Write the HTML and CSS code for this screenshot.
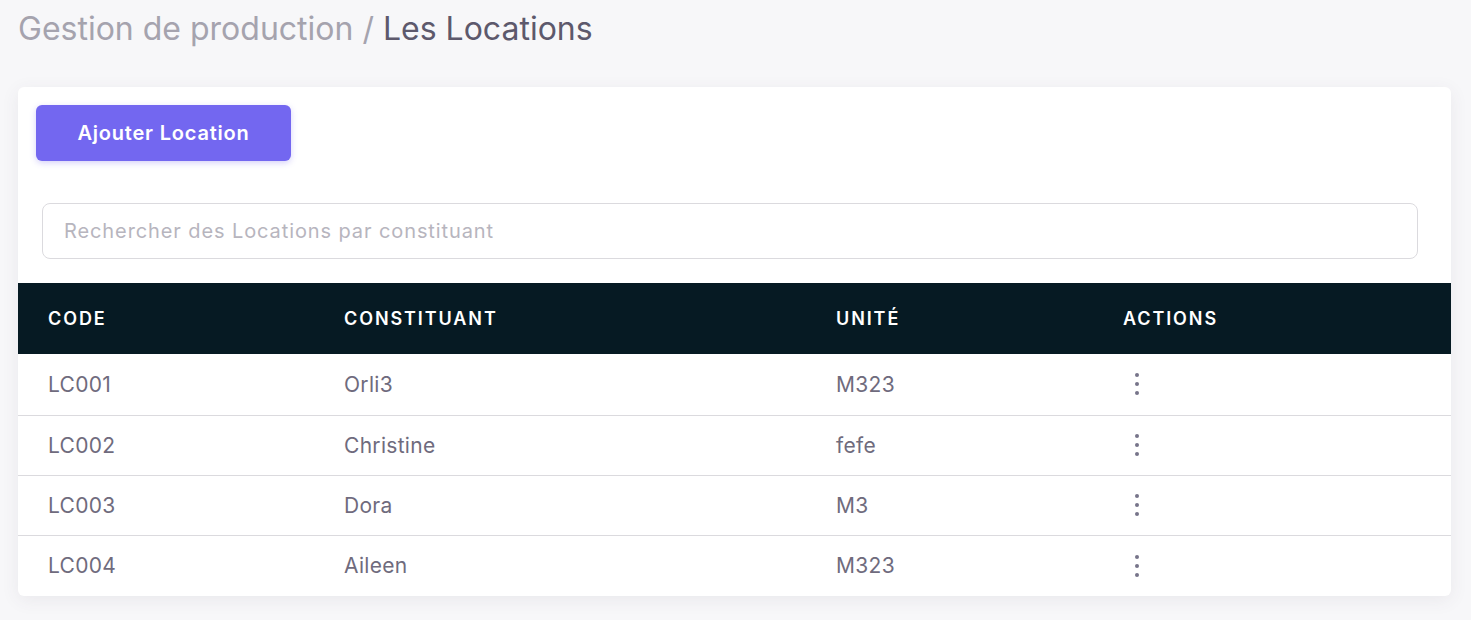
FILE: index.html
```html
<!DOCTYPE html>
<html lang="fr">
<head>
<meta charset="utf-8">
<title>Les Locations</title>
<link rel="stylesheet" href="styles.css">
</head>
<body>
<div class="page">
  <h1 class="title"><span class="crumb">Gestion de production /</span> <span class="current">Les Locations</span></h1>
  <div class="card">
    <div class="toolbar">
      <button class="btn-primary" type="button">Ajouter Location</button>
    </div>
    <div class="search-wrap">
      <input class="search" type="text" placeholder="Rechercher des Locations par constituant">
    </div>
    <table class="table">
      <thead>
        <tr>
          <th class="c1">Code</th>
          <th class="c2">Constituant</th>
          <th class="c3">Unité</th>
          <th class="c4">Actions</th>
        </tr>
      </thead>
      <tbody>
        <tr><td>LC001</td><td>Orli3</td><td>M323</td><td><span class="dots"><i></i><i></i><i></i></span></td></tr>
        <tr><td>LC002</td><td>Christine</td><td>fefe</td><td><span class="dots"><i></i><i></i><i></i></span></td></tr>
        <tr><td>LC003</td><td>Dora</td><td>M3</td><td><span class="dots"><i></i><i></i><i></i></span></td></tr>
        <tr><td>LC004</td><td>Aileen</td><td>M323</td><td><span class="dots"><i></i><i></i><i></i></span></td></tr>
      </tbody>
    </table>
  </div>
</div>
</body>
</html>
```
FILE: styles.css
```css
* { box-sizing: border-box; }
html, body { margin: 0; padding: 0; }
body {
  background: #f7f7f9;
  font-family: Inter, "Noto Sans", sans-serif;
  color: #6d6b77;
}
.page {
  padding: 9px 20px 20px 18px;
}
.title {
  margin: 0;
  height: 78px;
  font-size: 32px;
  font-weight: 400;
  line-height: 40px;
  letter-spacing: 0;
}
.crumb { color: #a5a3ae; }
.current { color: #5d596c; }
.card {
  width: 1433px;
  background: #fff;
  border-radius: 6px;
  box-shadow: 0 4px 18px rgba(75, 70, 92, 0.08);
  overflow: hidden;
}
.toolbar {
  padding: 18px 18px 0 18px;
}
.btn-primary {
  width: 255px;
  height: 56px;
  border: none;
  border-radius: 6px;
  background: #7367f0;
  color: #fff;
  font-family: Inter, "Noto Sans", sans-serif;
  font-size: 20px;
  font-weight: 600;
  letter-spacing: 0.8px;
  box-shadow: 0 2px 6px rgba(115, 103, 240, 0.3);
}
.search-wrap {
  padding: 42px 33px 24px 24px;
}
.search {
  display: block;
  width: 100%;
  height: 56px;
  border: 1px solid #dbdade;
  border-radius: 8px;
  padding: 0 21px;
  font-family: Inter, "Noto Sans", sans-serif;
  font-size: 20px;
  letter-spacing: 0.9px;
  color: #6d6b77;
  outline: none;
}
.search::placeholder { color: #b7b5be; }
.table {
  width: 100%;
  border-collapse: collapse;
}
.table th {
  background: #061a23;
  color: #fff;
  text-align: left;
  text-transform: uppercase;
  font-size: 18px;
  font-weight: 600;
  letter-spacing: 1.9px;
  height: 71px;
  padding: 0 30px;
}
.table .c1 { width: 296px; }
.table .c2 { width: 492px; }
.table .c3 { width: 287px; }
.table td {
  height: 60px;
  padding: 0 30px;
  font-size: 21px;
  letter-spacing: 0.3px;
  color: #6f6b7d;
  border-top: 1px solid #dbdade;
}
.table tbody tr:first-child td { border-top: none; height: 61px; }
.table tbody tr:last-child td { height: 61px; }
.dots {
  display: flex;
  flex-direction: column;
  align-items: center;
  gap: 5px;
  width: 4px;
  margin-left: 12px;
}
.dots i {
  display: block;
  width: 4px;
  height: 4px;
  border-radius: 50%;
  background: #77748a;
}
```
